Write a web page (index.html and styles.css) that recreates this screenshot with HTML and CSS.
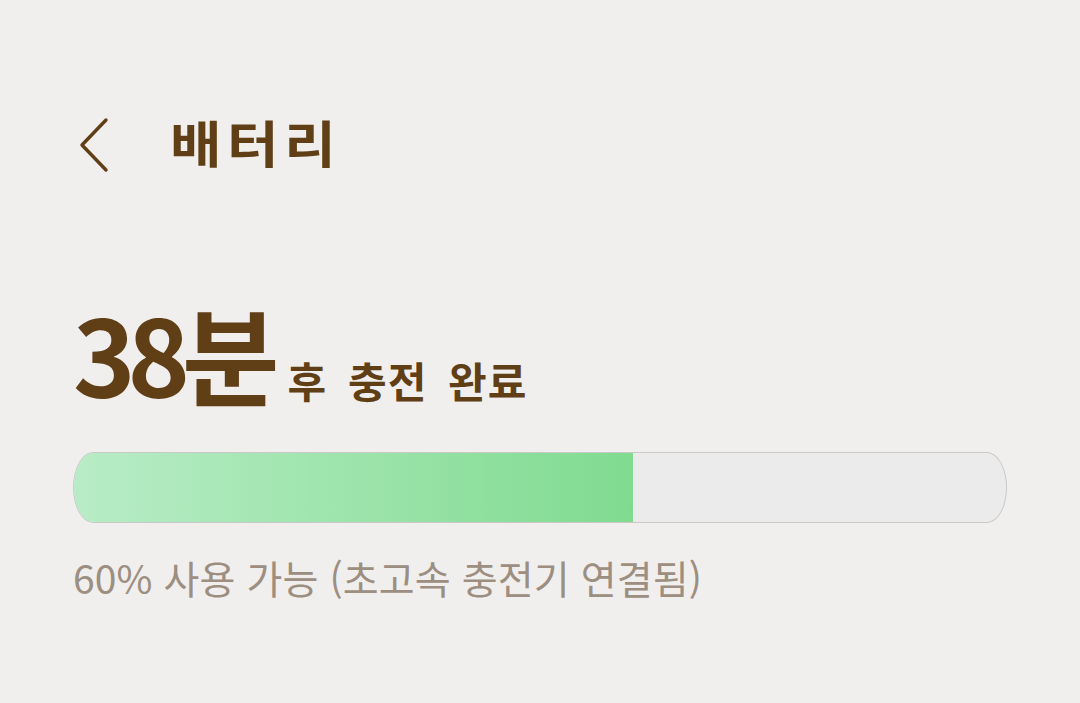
FILE: index.html
```html
<!DOCTYPE html>
<html lang="ko">
<head>
<meta charset="utf-8">
<link rel="stylesheet" href="styles.css">
</head>
<body>
<div class="page">
  <header class="header">
    <svg class="back" width="32" height="56" viewBox="0 0 32 56">
      <path d="M28 3 L4 28 L28 53" fill="none" stroke="#603f17" stroke-width="3.4" stroke-linecap="round" stroke-linejoin="round"/>
    </svg>
    <h1 class="title">배터리</h1>
  </header>
  <section class="status">
    <div class="headline">
      <span class="big">38분</span>
      <span class="rest">후 충전 완료</span>
    </div>
    <div class="bar">
      <div class="fill" style="width:60%"></div>
    </div>
    <p class="note">60% 사용 가능 (초고속 충전기 연결됨)</p>
  </section>
</div>
</body>
</html>
```

FILE: styles.css
```css
html, body {
  margin: 0;
  padding: 0;
  background: #f1efed;
}
body {
  font-family: "Noto Sans CJK KR", "Noto Sans", sans-serif;
  color: #603f17;
}
.page {
  width: 1080px;
  height: 703px;
  padding: 0 73px;
  box-sizing: border-box;
}
.header {
  display: flex;
  align-items: center;
  padding-top: 115px;
  height: 60px;
}
.back {
  margin-left: 5px;
  display: block;
}
.title {
  margin: 0 0 8px 60px;
  font-size: 50px;
  font-weight: 700;
  letter-spacing: 5px;
  line-height: 60px;
  transform: scaleX(1.12);
  transform-origin: left center;
}
.status {
  margin-top: 112px;
}
.headline {
  display: flex;
  align-items: baseline;
  height: 165px;
}
.big {
  font-size: 106px;
  font-weight: 700;
  letter-spacing: -8px;
  line-height: 130px;
}
.rest {
  margin-left: 16px;
  font-size: 42px;
  font-weight: 700;
  letter-spacing: 1px;
  word-spacing: 8px;
}
.bar {
  height: 71px;
  box-sizing: border-box;
  border: 1.5px solid #c9c8c7;
  border-radius: 20px / 50%;
  background: #ebebeb;
  overflow: hidden;
}
.fill {
  height: 100%;
  background: linear-gradient(to right, #b8ecc6, #80db90);
}
.note {
  margin: 28px 0 0 0;
  font-size: 39px;
  font-weight: 400;
  letter-spacing: 0.1px;
  color: #9c8e80;
  line-height: 52px;
}
```
